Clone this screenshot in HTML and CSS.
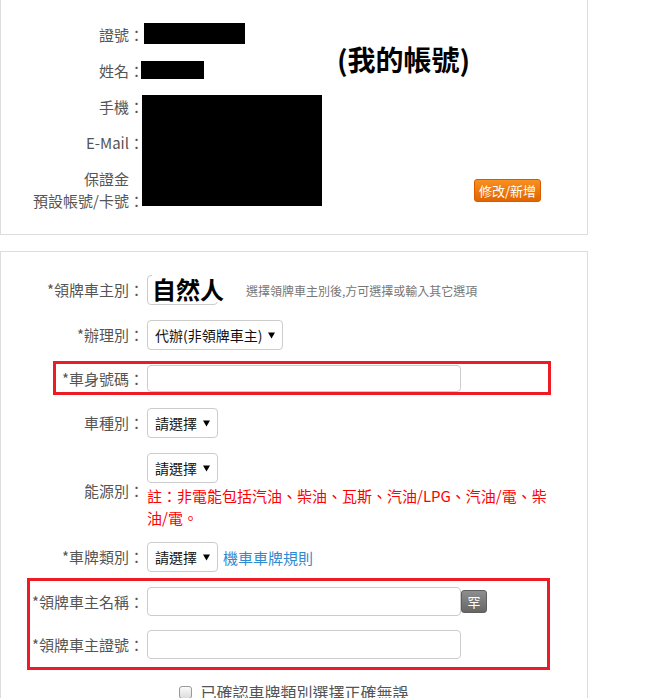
FILE: index.html
```html
<!DOCTYPE html>
<html lang="zh-Hant">
<head>
<meta charset="utf-8">
<title>我的帳號</title>
<link rel="stylesheet" href="styles.css">
</head>
<body>
<div class="card card-account">
  <div class="acc-grid">
    <div class="lbl row1">證號：</div>
    <div class="redact redact-id"></div>
    <h2 class="acc-title">(我的帳號)</h2>
    <div class="lbl row2">姓名：</div>
    <div class="redact redact-name"></div>
    <div class="lbl row3">手機：</div>
    <div class="redact redact-big"></div>
    <div class="lbl row4">E-Mail：</div>
    <div class="lbl row5"><span class="lbl-first">保證金</span>預設帳號/卡號：</div>
    <button class="btn-orange" type="button">修改/新增</button>
  </div>
</div>

<div class="card card-form">
  <div class="frow">
    <div class="flbl">*領牌車主別：</div>
    <div class="fctl">
      <div class="owner-box"><span class="owner-text">自然人</span></div>
      <span class="hint">選擇領牌車主別後,方可選擇或輸入其它選項</span>
    </div>
  </div>

  <div class="frow gap15">
    <div class="flbl">*辦理別：</div>
    <div class="fctl">
      <div class="sel sel-agent"><span>代辦(非領牌車主)</span><svg class="arrow" width="7" height="7" viewBox="0 0 7 7"><path d="M0 0.5H7L3.5 6.5Z" fill="#000"/></svg></div>
    </div>
  </div>

  <div class="hl hl-one">
    <div class="frow">
      <div class="flbl">*車身號碼：</div>
      <div class="fctl"><div class="txt txt-short"></div></div>
    </div>
  </div>

  <div class="frow gap13">
    <div class="flbl">車種別：</div>
    <div class="fctl">
      <div class="sel sel-short"><span>請選擇</span><svg class="arrow" width="7" height="7" viewBox="0 0 7 7"><path d="M0 0.5H7L3.5 6.5Z" fill="#000"/></svg></div>
    </div>
  </div>

  <div class="frow gap15">
    <div class="flbl">能源別：</div>
    <div class="fctl fctl-stack">
      <div class="sel sel-short"><span>請選擇</span><svg class="arrow" width="7" height="7" viewBox="0 0 7 7"><path d="M0 0.5H7L3.5 6.5Z" fill="#000"/></svg></div>
      <div class="note">註：非電能包括汽油、柴油、瓦斯、汽油/LPG、汽油/電、柴油/電。</div>
    </div>
  </div>

  <div class="frow gap13">
    <div class="flbl">*車牌類別：</div>
    <div class="fctl">
      <div class="sel sel-short"><span>請選擇</span><svg class="arrow" width="7" height="7" viewBox="0 0 7 7"><path d="M0 0.5H7L3.5 6.5Z" fill="#000"/></svg></div>
      <a class="rule-link" href="#">機車車牌規則</a>
    </div>
  </div>

  <div class="hl hl-two">
    <div class="frow">
      <div class="flbl">*領牌車主名稱：</div>
      <div class="fctl">
        <div class="txt"></div>
        <button class="btn-gray" type="button">罕</button>
      </div>
    </div>
    <div class="frow gap14">
      <div class="flbl">*領牌車主證號：</div>
      <div class="fctl"><div class="txt"></div></div>
    </div>
  </div>

  <div class="confirm">
    <span class="chk"></span>
    <span class="confirm-text">已確認車牌類別選擇正確無誤</span>
  </div>
</div>
</body>
</html>
```

FILE: styles.css
```css
* {
  box-sizing: border-box;
}

html,
body {
  margin: 0;
  padding: 0;
  background: #fff;
}

body {
  width: 647px;
  height: 698px;
  overflow: hidden;
  font-family: "Noto Sans CJK TC", "Noto Sans", sans-serif;
  font-size: 14px;
  color: #555;
}

.card {
  width: 588px;
  border: 1px solid #ddd;
  background: #fff;
}

/* ---------- account card ---------- */
.card-account {
  border-top: 0;
  padding: 24px 46px 22px 0;
}

.acc-grid {
  display: grid;
  grid-template-columns: 143px 193px 204px;
  grid-template-rows: 22px 22px 22px 22px 44px;
  row-gap: 14px;
}

.lbl {
  grid-column: 1;
  text-align: right;
  font-size: 15px;
  line-height: 22px;
  white-space: nowrap;
}

.row1 { grid-row: 1; }
.row2 { grid-row: 2; }
.row3 { grid-row: 3; }
.row4 { grid-row: 4; }
.row5 { grid-row: 5; }

.lbl-first {
  display: block;
  padding-right: 15px;
}

.redact {
  background: #000;
  grid-column: 2;
  align-self: start;
}

.redact-id {
  grid-row: 1;
  width: 101px;
  height: 21px;
  margin: -1px 0 0 0;
}

.redact-name {
  grid-row: 2;
  width: 63px;
  height: 18px;
  margin: 1px 0 0 -3px;
}

.redact-big {
  grid-row: 3 / 6;
  width: 180px;
  height: 111px;
  margin: -1px 0 0 -2px;
}

.acc-title {
  grid-column: 3;
  grid-row: 1 / 3;
  align-self: start;
  margin: 18px 0 0;
  font-size: 28px;
  line-height: 34px;
  font-weight: bold;
  color: #000;
  white-space: nowrap;
}

.btn-orange {
  grid-column: 3;
  grid-row: 5;
  justify-self: end;
  align-self: center;
  width: 67px;
  height: 23px;
  padding: 0;
  border: 1px solid #d55a00;
  border-radius: 3px;
  background: linear-gradient(#f8901f, #e26400);
  color: #fff;
  font-family: "Noto Sans CJK TC", "Noto Sans", sans-serif;
  font-size: 13px;
  line-height: 21px;
}

/* ---------- form card ---------- */
.card-form {
  margin-top: 16px;
  padding: 23px 0 40px 0;
}

.frow {
  display: grid;
  grid-template-columns: var(--lw, 143px) auto;
  column-gap: 3px;
  align-items: center;
}

.gap13 { margin-top: 13px; }
.gap14 { margin-top: 14px; }
.gap15 { margin-top: 15px; }

.flbl {
  text-align: right;
  white-space: nowrap;
  font-size: 15px;
  line-height: 22px;
}

.fctl {
  display: flex;
  align-items: center;
}

.fctl-stack {
  display: block;
}

.owner-box {
  width: 71px;
  height: 30px;
  border: 1px solid #ccc;
  border-radius: 4px;
  background: #fff;
  white-space: nowrap;
}

.owner-text {
  display: inline-block;
  vertical-align: top;
  margin: -1px 0 0 4px;
  padding-right: 2px;
  background: #fff;
  color: #000;
  font-size: 24px;
  font-weight: bold;
  line-height: 27px;
}

.hint {
  margin-left: 28px;
  font-size: 12px;
  color: #777;
  white-space: nowrap;
}

.sel {
  display: flex;
  align-items: center;
  justify-content: space-between;
  height: 30px;
  padding: 0 7px 0 7px;
  border: 1px solid #ccc;
  border-radius: 4px;
  background: #fff;
  color: #111;
  font-size: 14px;
  white-space: nowrap;
}

.sel-short { width: 71px; }
.sel-agent { width: 136px; }

.arrow {
  flex: none;
}

.note {
  width: 400px;
  margin-top: 2px;
  color: #f00;
  font-size: 15px;
  line-height: 22px;
}

.rule-link {
  margin-left: 5px;
  color: #2e8bd0;
  font-size: 15px;
  text-decoration: none;
}

.txt {
  width: 314px;
  height: 29px;
  border: 1px solid #ccc;
  border-radius: 4px;
  background: #fff;
}

.txt-short {
  height: 27px;
}

.hl {
  border: 3px solid #ed1c24;
}

.hl-one {
  --lw: 88px;
  width: 498px;
  margin: 11px 0 0 52px;
  padding-top: 1px;
}

.hl-two {
  --lw: 114px;
  width: 523px;
  margin: 6px 0 0 26px;
  padding: 6px 0 8px;
}

.btn-gray {
  width: 26px;
  height: 23px;
  padding: 0;
  border: 1px solid #5e5e5e;
  border-radius: 3px;
  background: linear-gradient(#8e8e8e, #666);
  color: #fff;
  font-family: "Noto Sans CJK TC", "Noto Sans", sans-serif;
  font-size: 13px;
  line-height: 21px;
}

.confirm {
  display: flex;
  justify-content: center;
  align-items: center;
  margin-top: 11px;
  font-size: 16px;
  line-height: 22px;
  color: #555;
}

.chk {
  width: 13px;
  height: 13px;
  margin-right: 8px;
  border: 1px solid #999;
  border-radius: 3px;
  background: linear-gradient(#fafafa, #dcdcdc);
}
```
